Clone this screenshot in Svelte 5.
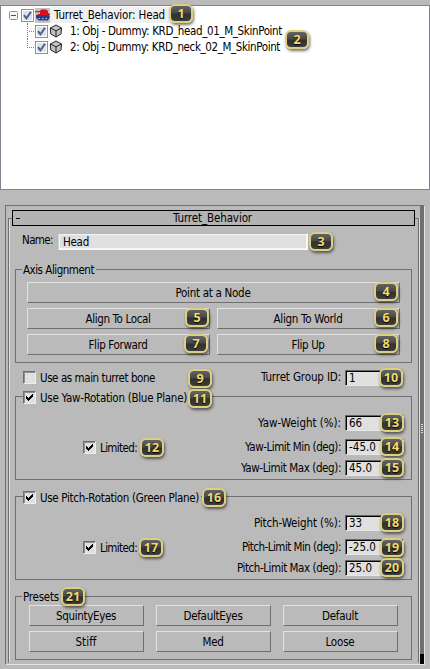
<script>
  // Spreads the letters of a caption so that it takes up the given width.
  function fit(node, width) {
    const natural = node.getBoundingClientRect().width;
    node.style.letterSpacing = (width - natural) / node.textContent.length + 'px';
  }

  const nodes = [
    { label: '1: Obj - Dummy: KRD_head_01_M_SkinPoint', width: 212 },
    { label: '2: Obj - Dummy: KRD_neck_02_M_SkinPoint', width: 210 }
  ];

  const rotations = [
    {
      title: 'Use Yaw-Rotation (Blue Plane)', width: 147,
      fields: [
        { label: 'Yaw-Weight (%):', width: 83, value: '66', vw: 13 },
        { label: 'Yaw-Limit Min (deg):', width: 96, value: '-45.0', vw: 27 },
        { label: 'Yaw-Limit Max (deg):', width: 100, value: '45.0', vw: 23 }
      ]
    },
    {
      title: 'Use Pitch-Rotation (Green Plane)', width: 159,
      fields: [
        { label: 'Pitch-Weight (%):', width: 87, value: '33', vw: 13 },
        { label: 'Pitch-Limit Min (deg):', width: 99, value: '-25.0', vw: 27 },
        { label: 'Pitch-Limit Max (deg):', width: 104, value: '25.0', vw: 23 }
      ]
    }
  ];

  const presets = [
    ['SquintyEyes', 60], ['DefaultEyes', 59], ['Default', 36],
    ['Stiff', 21], ['Med', 21], ['Loose', 29]
  ];

  // Callout positions, in number order.
  const callouts = [
    [169, 4], [285, 30], [309, 232], [374, 282], [185, 308], [374, 308], [184, 334],
    [374, 334], [188, 369], [379, 368], [188, 389], [140, 438], [380, 413], [380, 437],
    [380, 458], [202, 488], [139, 538], [380, 513], [380, 538], [380, 558], [61, 587]
  ];
</script>

{#snippet text(label, width)}
  <span class="text" use:fit={width}>{label}</span>
{/snippet}

{#snippet treeCheck()}
  <svg class="treecheck" width="13" height="13" viewBox="0 0 13 13">
    <rect x=".5" y=".5" width="12" height="12" fill="#fff" stroke="#8e8f8f" />
    <rect x="2" y="2" width="9" height="9" fill="#dde1e8" />
    <path d="M3 6.2 5.4 9.4 10 2.8" fill="none" stroke="#4a5f97" stroke-width="2" />
  </svg>
{/snippet}

{#snippet check(on)}
  <span class="check">
    {#if on}
      <svg width="9" height="9" viewBox="0 0 9 9" shape-rendering="crispEdges">
        <path d="M1 3h1v1h1v1h1v-1h1v-1h1v-1h1v-1h1v3h-1v1h-1v1h-1v1h-1v1h-1v-1h-1v-1h-1z" fill="#000" />
      </svg>
    {/if}
  </span>
{/snippet}

<main>
  <section class="tree">
    <div class="row root">
      <svg class="toggle" width="9" height="9" viewBox="0 0 9 9">
        <rect x=".5" y=".5" width="8" height="8" rx="1" fill="#f6f6f6" stroke="#919191" />
        <path d="M2 4.5h5" stroke="#3c507c" />
      </svg>
      {@render treeCheck()}
      <svg class="tank" width="16" height="16" viewBox="0 0 16 16">
        <rect y="1" width="15" height="15" fill="#c4c4c4" />
        <path d="M0 4h5l1-1.5h5l2 1.5v2l2 1v1H3L2 7h3V5.200H0z" fill="#d8101c" />
        <path d="M1 8h13l1 2-2 3.500H4L1 11z" fill="#2a4186" />
        <path d="M3.500 11.500h9" stroke="#b3bdd8" stroke-width="1.200" stroke-dasharray="1.500 2" />
      </svg>
      <div class="selected">{@render text('Turret_Behavior: Head', 111)}</div>
    </div>
    <div class="children">
      {#each nodes as node}
        <div class="row">
          <i class="branch"></i>
          {@render treeCheck()}
          <svg class="cube" width="14" height="14" viewBox="0 0 14 14">
            <path d="M7 1 12.5 4 12 10 7 13 1.8 10 1.3 4z" fill="#c2c2c2" stroke="#222" />
            <path d="M1.3 4 7 6.8 12.5 4M7 6.8V13" fill="none" stroke="#222" />
          </svg>
          {@render text(node.label, node.width)}
        </div>
      {/each}
    </div>
  </section>

  <section class="panel">
    <div class="content">
      <div class="rollout">
        <header><b></b>{@render text('Turret_Behavior', 79)}</header>

        <div class="name">
          {@render text('Name:', 31)}
          <div class="namefield">{@render text('Head', 26)}</div>
        </div>

        <div class="group axis">
          <div class="legend">{@render text('Axis Alignment', 71)}</div>
          <div class="button wide">{@render text('Point at a Node', 75)}</div>
          <div class="button">{@render text('Align To Local', 65)}</div>
          <div class="button">{@render text('Align To World', 69)}</div>
          <div class="button">{@render text('Flip Forward', 59)}</div>
          <div class="button">{@render text('Flip Up', 33)}</div>
        </div>

        <div class="bone">
          {@render check(false)}
          {@render text('Use as main turret bone', 115)}
          <div class="field">
            {@render text('Turret Group ID:', 80)}
            <div class="value">{@render text('1', 6)}</div>
          </div>
        </div>

        {#each rotations as r}
          <div class="group rotation">
            <div class="legend checked">{@render check(true)}{@render text(r.title, r.width)}</div>
            <div class="limited">{@render check(true)}{@render text('Limited:', 37)}</div>
            <div class="fields">
              {#each r.fields as f}
                <div class="field">
                  {@render text(f.label, f.width)}
                  <div class="value">{@render text(f.value, f.vw)}</div>
                </div>
              {/each}
            </div>
          </div>
        {/each}

        <div class="group presets">
          <div class="legend">{@render text('Presets', 36)}</div>
          {#each presets as [label, width]}
            <div class="button">{@render text(label, width)}</div>
          {/each}
        </div>
      </div>
    </div>
    <div class="scroll"><i></i></div>
  </section>

  {#each callouts as [x, y], i}
    <span class="callout" style="left:{x}px;top:{y}px">{i + 1}</span>
  {/each}
</main>

<style>
  :global(body) { margin: 0; background: #bababa; }
  main {
    position: relative; width: 430px; height: 669px; box-sizing: border-box;
    padding-top: 5px; overflow: hidden; background: #bababa; color: #000;
    font: 11.5px/16px "DejaVu Sans Condensed", "DejaVu Sans", sans-serif;
  }
  main * { box-sizing: border-box; }
  svg { display: block; flex: none; }
  .text { white-space: pre; flex: none; }

  .tree { height: 185px; border: 1px solid #828290; background: #fff; padding: 1px 0 0 8px; }
  .row { display: flex; height: 16px; align-items: center; }
  .toggle { margin-right: 3px; }
  .treecheck { margin-right: 1px; }
  .selected { height: 16px; padding: 0 4px; background: #f0f0f0; }
  .root .tank { margin-right: -1px; }
  .children { padding-left: 18px; }
  .branch { width: 8px; height: 16px; position: relative; flex: none; border-left: 1px dotted #808080; }
  .branch::after { content: ''; position: absolute; left: 1px; top: 8px; width: 5px; border-top: 1px dotted #808080; }
  .row:last-child .branch { height: 9px; align-self: flex-start; }
  .cube { margin: 0 6px 0 0; }
  .children .text { margin-left: 1px; }

  .panel {
    display: flex; width: 420px; height: 460px; margin: 15px 0 0 5px;
    border: 1px solid #6f6f6f; border-right-color: #e4e4e4; border-bottom-color: #e4e4e4;
  }
  .content { width: 414px; padding: 4px 0 0 2px; }
  .rollout {
    position: relative; width: 411px; height: 453px; padding: 0 4px;
  }
  .rollout::before {
    content: ''; position: absolute; left: 0; right: 0; top: 8px; bottom: 0;
    border: solid #707070; border-width: 1px 1px 0 1px;
    box-shadow: 1px 0 #dedede, inset 1px 0 #dedede;
  }
  header {
    position: relative; display: flex; justify-content: center; height: 16px;
    border: 1px solid #000; background: #b3b3b3; line-height: 15px;
  }
  header b { position: absolute; left: 3px; top: 7px; width: 4px; height: 1px; background: #000; }
  header .text { margin-right: 2px; }
  .name { display: flex; height: 17px; margin: 7px 0 0 10px; line-height: 14px; position: relative; }
  .namefield {
    width: 250px; height: 17px; margin-left: 5px; padding-left: 4px; background: #e0e0e0; line-height: 16px;
    border: 1px solid #f8fafc; border-top-color: #b0b8c0; border-left-color: #c6ced8;
    box-shadow: inset 0 1px #f4f4f4, inset 1px 0 #f8f8f8, inset 0 -1px #f4f4f4, inset -1px 0 #f8f8f8;
  }
  .group { position: relative; width: 397px; margin-left: 3px; border: 1px solid #707070; }
  .legend {
    position: absolute; left: 6px; top: -8px; height: 16px; padding: 0 2px 0 1px;
    background: #bababa; display: flex; line-height: 16px;
  }
  .legend.checked { left: 7px; padding: 0 2px 0 0; line-height: 18px; }
  .legend .check, .limited .check { margin: 2px 4px 0 0; }
  .button {
    display: flex; justify-content: center; height: 21px; line-height: 20px; padding-right: 1px;
    border: 1px solid #e2e2e2; border-right-color: #6f6f6f; border-bottom-color: #6f6f6f;
  }
  .axis {
    height: 94px; margin-top: 19px; padding: 12px 11px 0;
    display: grid; grid-template-columns: 183px 183px; grid-auto-rows: 21px; gap: 5px 7px;
  }
  .wide { grid-column: span 2; }
  .check {
    flex: none; width: 13px; height: 13px; padding: 1px; background: #e0e0e0;
    border: 1px solid #ededed; border-top-color: #667078; border-left-color: #667078;
    box-shadow: inset 1px 1px #8a9298;
  }
  .bone { display: flex; height: 33px; margin-left: 11px; padding-top: 7px; }
  .bone .check { margin: 1px 4px 0 0; }
  .bone > .text { line-height: 17px; }
  .bone .field { margin-left: auto; margin-right: 11px; }
  .field { display: flex; justify-content: flex-end; height: 16px; line-height: 17px; }
  .bone .field { line-height: 15px; }
  .value {
    width: 59px; height: 16px; margin-left: 4px; padding-left: 3px; background: #e0e0e0; line-height: 15px;
    border: 1px solid #e6e6e6; border-top-color: #666; border-left-color: #666;
    box-shadow: inset 1px 1px #000;
  }
  .bone .value { width: 58px; margin-right: 1px; }
  .rotation { height: 84px; margin-bottom: 16px; display: flex; justify-content: space-between; }
  .limited { display: flex; margin: 42px 0 0 67px; line-height: 18px; }
  .fields { display: flex; flex-direction: column; padding: 18px 7px 0 0; }
  .fields .field { line-height: 16px; }
  .fields .field + .field { margin-top: 8px; }
  .fields .field:last-child { margin-top: 5px; }
  .presets {
    height: 64px; padding: 8px 0 0 13px;
    display: grid; grid-template-columns: repeat(3, 115px); grid-auto-rows: 21px; gap: 5px 12px;
  }
  .scroll { position: relative; width: 4px; height: 458px; background: linear-gradient(#707070 448px, #000 448px); }
  .scroll i {
    position: absolute; left: 1px; top: 218px; width: 2px; height: 10px;
    background: repeating-linear-gradient(#ddd 0 1px, #707070 1px 2px);
  }
  .callout {
    position: absolute; width: 24px; height: 19px; border: 2px solid #dccf7e; border-radius: 6px;
    background: linear-gradient(#636363, #484848 48%, #303030 52%, #3d3d3d);
    box-shadow: 1px 2px 3px rgba(0, 0, 0, .55);
    color: #f0dc70; font: bold 12.5px/15px "Noto Sans", sans-serif; text-align: center;
    text-shadow: 0 1px 1px #000;
  }
</style>
